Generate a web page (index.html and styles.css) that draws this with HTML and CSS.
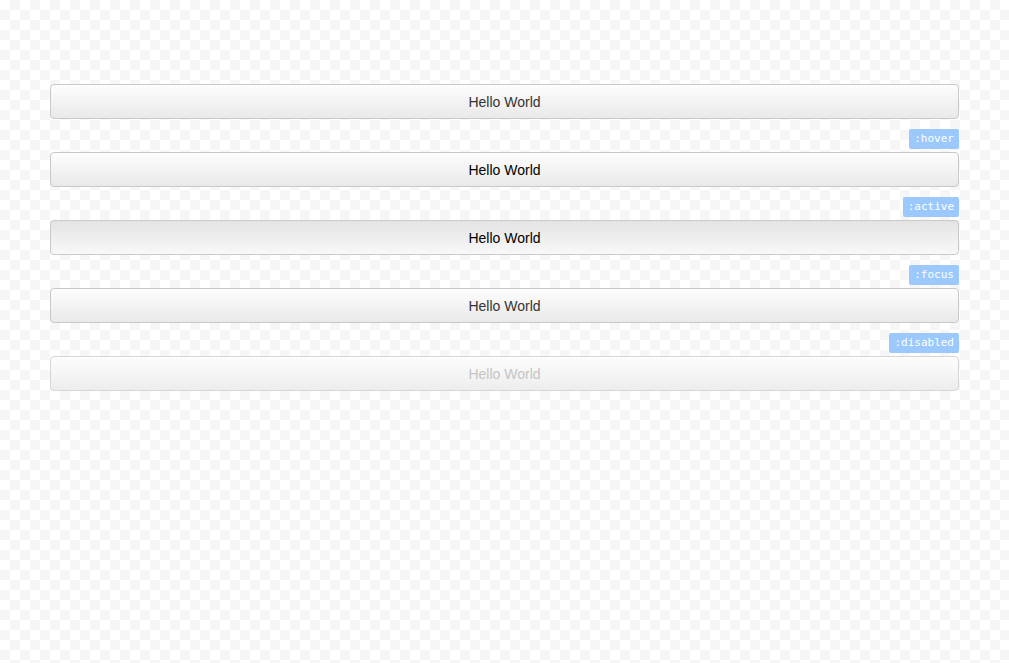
FILE: index.html
```html
<!DOCTYPE html>
<html>
<head>
<meta charset="utf-8">
<link rel="stylesheet" href="styles.css">
</head>
<body>
<div class="page">
  <div class="item">
    <button class="btn">Hello World</button>
  </div>
  <div class="item">
    <span class="tag">:hover</span>
    <button class="btn btn-hover">Hello World</button>
  </div>
  <div class="item">
    <span class="tag">:active</span>
    <button class="btn btn-active">Hello World</button>
  </div>
  <div class="item">
    <span class="tag">:focus</span>
    <button class="btn">Hello World</button>
  </div>
  <div class="item">
    <span class="tag">:disabled</span>
    <button class="btn btn-disabled" disabled>Hello World</button>
  </div>
</div>
</body>
</html>
```
FILE: styles.css
```css
html, body {
  margin: 0;
  height: 100%;
}
body {
  background: repeating-conic-gradient(#f6f6f6 0 25%, #ffffff 0 50%) 0 0 / 20px 20px;
  font-family: "Liberation Sans", Arial, sans-serif;
}
.page {
  padding: 84px 50px 0;
  display: flex;
  flex-direction: column;
  gap: 10px;
}
.item {
  display: flex;
  flex-direction: column;
  align-items: flex-end;
}
.tag {
  display: block;
  height: 20px;
  line-height: 20px;
  padding: 0 5px;
  margin-bottom: 3px;
  background: #9bc9fd;
  color: #fff;
  border-radius: 2px;
  font-family: "DejaVu Sans Mono", monospace;
  font-size: 11px;
}
.btn {
  box-sizing: border-box;
  width: 100%;
  height: 35px;
  margin: 0;
  padding: 0;
  border: 1px solid #c9c9c9;
  border-radius: 4px;
  background: linear-gradient(to bottom, #fdfdfd, #e9e9e9);
  font-family: "Liberation Sans", Arial, sans-serif;
  font-size: 14px;
  color: #333;
}
.btn-hover {
  color: #000;
}
.btn-active {
  color: #000;
  background: linear-gradient(to bottom, #e4e4e4, #f8f8f8);
}
.btn-disabled {
  color: #c4c4c4;
  border-color: #d6d6d6;
  background: linear-gradient(to bottom, #fdfdfd, #ededed);
}
```
